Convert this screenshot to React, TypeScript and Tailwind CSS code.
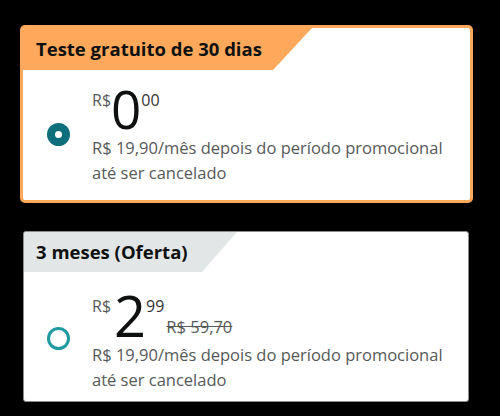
import React from "react";

/**
 * Plan picker: two subscription cards on a black backdrop.
 */

const font = { fontFamily: '"Open Sans", "Noto Sans", Arial, sans-serif' };

function Radio({ selected }: { selected: boolean }) {
  return selected ? (
    <span className="block w-[23px] h-[23px] shrink-0 rounded-full border-[8px] border-[#0e6e7b] bg-white" />
  ) : (
    <span className="block w-[23px] h-[23px] shrink-0 rounded-full border-[3px] border-[#1f9aa2] bg-white" />
  );
}

function Description() {
  return (
    <p className="text-[16.5px] leading-[25px] text-[#565959]">
      R$ 19,90/mês depois do período promocional
      <br />
      até ser cancelado
    </p>
  );
}

export default function App() {
  return (
    <div className="w-[500px] h-[416px] bg-black pt-[25px] overflow-hidden" style={font}>
      {/* Selected plan */}
      <div className="ml-[20px] w-[453px] h-[178px] rounded-[5px] border-[3px] border-[#fda85b] bg-white overflow-hidden">
        <div className="h-[42px] w-[289px] bg-[#fda85b] pl-[13px] flex items-center [clip-path:polygon(0_0,289px_0,250px_100%,0_100%)]">
          <span className="text-[18.5px] font-bold text-[#0f1111]">Teste gratuito de 30 dias</span>
        </div>
        <div className="flex items-center pl-[24px] pt-[13px] pb-[15px]">
          <Radio selected />
          <div className="ml-[22px]">
            <div className="flex items-start h-[52px]">
              <span className="mt-[9px] text-[16px] leading-[16px] text-[#565959]">R$</span>
              <span className="text-[53px] leading-[52px] font-normal text-[#0f1111]">0</span>
              <span className="mt-[9px] text-[16px] leading-[16px] text-[#333]">00</span>
            </div>
            <Description />
          </div>
        </div>
      </div>

      {/* Offer plan */}
      <div className="mt-[28px] ml-[23px] w-[446px] h-[171px] rounded-[3px] border border-[#8a8e8e] bg-white overflow-hidden">
        <div className="h-[40px] w-[213px] bg-[#e3e6e6] pl-[12px] flex items-center [clip-path:polygon(0_0,213px_0,178px_100%,0_100%)]">
          <span className="text-[18.5px] font-bold text-[#0f1111]">3 meses (Oferta)</span>
        </div>
        <div className="flex items-center pl-[23px] pt-[12px] pb-[13px]">
          <Radio selected={false} />
          <div className="ml-[22px] mt-[4px]">
            <div className="flex items-start h-[54px]">
              <span className="mt-[10px] text-[16px] leading-[16px] text-[#565959]">R$</span>
              <span className="ml-[3px] text-[56px] leading-[54px] font-normal text-[#0f1111]">2</span>
              <span className="mt-[10px] text-[16px] leading-[16px] text-[#333]">99</span>
              <span className="ml-[2px] mt-[28px] text-[16.5px] leading-[22px] text-[#565959] line-through">
                R$ 59,70
              </span>
            </div>
            <Description />
          </div>
        </div>
      </div>
    </div>
  );
}
